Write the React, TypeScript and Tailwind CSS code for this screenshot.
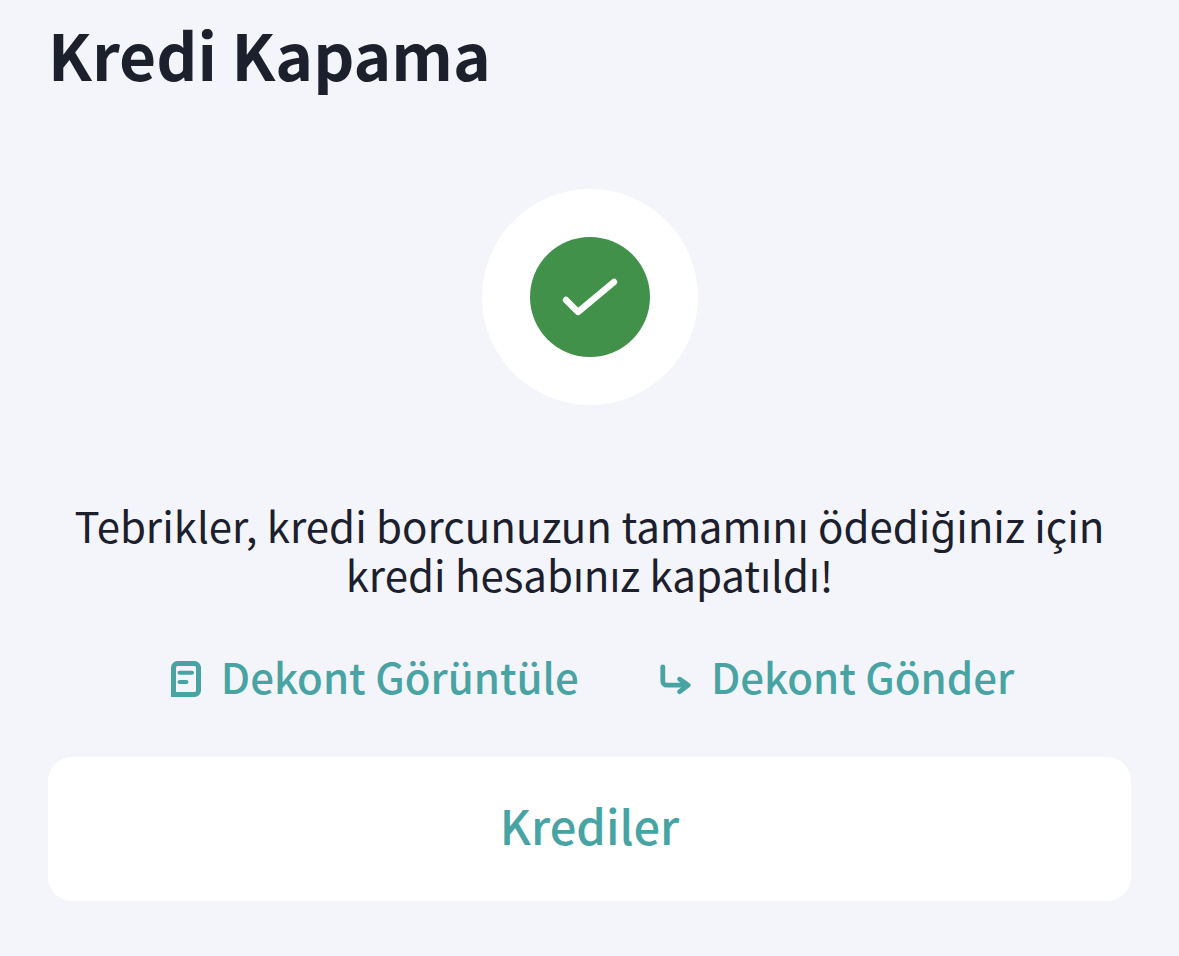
import React from "react";

function ReceiptIcon() {
  return (
    <svg className="size-9 shrink-0" viewBox="0 0 36 36" fill="none" stroke="currentColor" aria-hidden="true">
      <path strokeWidth="5" d="M8.5 33.5V6.5a4 4 0 0 1 4-4h17a4 4 0 0 1 4 4v23a4 4 0 0 1-4 4Z" />
      <path strokeWidth="4" strokeLinecap="round" d="M14.5 11.8h12.5M14.5 21h7" />
    </svg>
  );
}

function SendIcon() {
  return (
    <svg className="size-9 shrink-0" viewBox="0 0 36 36" fill="none" stroke="currentColor" strokeWidth="4.8" strokeLinecap="round" strokeLinejoin="round" aria-hidden="true">
      <path d="M7.8 5.8v14.4a4 4 0 0 0 4 4h20.7M24.7 18.2l8.5 6-8.5 6.5" />
    </svg>
  );
}

export default function App() {
  return (
    <main className="min-h-screen bg-[#f4f5fb] px-12 pt-[17px] pb-14 font-['Noto_Sans_CJK_JP','Noto_Sans',sans-serif] text-[#1c202d]">
      <h1 className="text-[64px] leading-[72px] font-bold">Kredi Kapama</h1>
      <div className="mx-auto mt-25 flex size-[216px] items-center justify-center rounded-full bg-white">
        <div className="flex size-[120px] items-center justify-center rounded-full bg-[#42914b]">
          <svg className="h-10 w-14" viewBox="0 0 56 40" fill="none" stroke="white" strokeWidth="6.4" strokeLinecap="round" strokeLinejoin="round" aria-hidden="true">
            <path d="M4 23l12 12L52 5" />
          </svg>
        </div>
      </div>
      <p className="mt-[95px] text-center text-[42px] leading-[49px]">
        Tebrikler, kredi borcunuzun tamamını ödediğiniz için kredi hesabınız kapatıldı!
      </p>
      <div className="mt-[53px] flex justify-center gap-19 text-[42px] leading-[50px] font-medium text-[#48a3a3]">
        <button type="button" className="flex items-center gap-5"><ReceiptIcon /><span className="pb-1.5">Dekont Görüntüle</span></button>
        <button type="button" className="flex items-center gap-5"><SendIcon /><span className="pb-1.5">Dekont Gönder</span></button>
      </div>
      <button type="button" className="mt-[50px] h-36 w-full rounded-3xl bg-white pb-2 text-[47px] font-medium text-[#48a3a3]">Krediler</button>
    </main>
  );
}
